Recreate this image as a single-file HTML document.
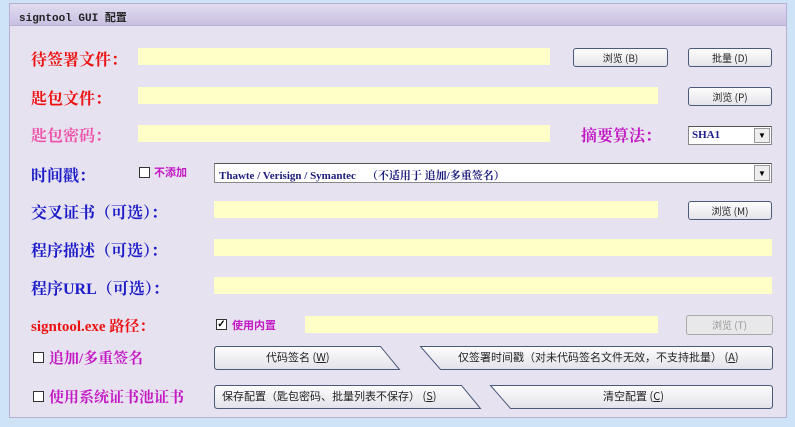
<!DOCTYPE html>
<html><head><meta charset="utf-8"><style>
*{margin:0;padding:0;box-sizing:border-box}
body{width:795px;height:427px;background:#cfe3f7;position:relative;overflow:hidden;font-family:"Liberation Serif","Noto Serif CJK SC",serif}
.panel{position:absolute;left:9px;top:3px;width:778px;height:415px;background:#e6e2f0;border:1px solid #b8b0d4}
.hdr{position:absolute;left:9px;top:3px;width:778px;height:23px;background:linear-gradient(#e2dcf0,#c9c0e2);border:1px solid #b8b0d4;font:bold 11px "Liberation Mono","Noto Sans CJK SC",monospace;color:#222;padding:5px 9px}
.a{position:absolute;white-space:nowrap}
.lbl{font-weight:bold;font-size:16px;font-family:"Liberation Serif","Noto Serif CJK SC",serif}
.red{color:#ee1111}.pink{color:#ee55aa}.blue{color:#1c1cc8}.mag{color:#c418c4}
.in{position:absolute;background:#ffffc8;height:17px}
.btn{position:absolute;background:linear-gradient(#fdfdfd,#e4e4ea);border:1px solid #4a5a7a;border-radius:3px;font:10px "Noto Sans CJK SC",sans-serif;color:#222;text-align:center;line-height:17px}
.cb{position:absolute;width:11px;height:11px;border:1px solid #333;background:#fff;font:bold 10px sans-serif;line-height:9px;text-align:center}
.st{font-size:11px;font-weight:bold;font-family:"Noto Sans CJK SC",sans-serif}
.bt{position:absolute;font:11px "Noto Sans CJK SC",sans-serif;color:#222}
</style></head><body>
<div class="panel"></div>
<div class="hdr">signtool GUI 配置</div>

<div class="a lbl red" style="left:31px;top:47px">待签署文件：</div>
<div class="in" style="left:138px;top:48px;width:412px"></div>
<div class="btn" style="left:573px;top:48px;width:95px;height:19px">浏览 (B)</div>
<div class="btn" style="left:688px;top:48px;width:84px;height:19px">批量 (D)</div>

<div class="a lbl red" style="left:31px;top:86px">匙包文件：</div>
<div class="in" style="left:138px;top:87px;width:520px"></div>
<div class="btn" style="left:688px;top:87px;width:84px;height:19px">浏览 (P)</div>

<div class="a lbl pink" style="left:31px;top:123px">匙包密码：</div>
<div class="in" style="left:138px;top:125px;width:412px"></div>
<div class="a lbl mag" style="left:581px;top:123px">摘要算法：</div>
<div class="a" style="left:688px;top:126px;width:84px;height:19px;background:#fff;border:1px solid #888;border-top-color:#555;font:bold 11px 'Liberation Serif',serif;color:#1c1c8c;padding:2px 3px">SHA1</div>
<div class="a" style="left:754px;top:128px;width:16px;height:15px;background:#eee;border:1px solid #999;font-size:8px;text-align:center;line-height:14px">▼</div>

<div class="a lbl blue" style="left:31px;top:163px">时间戳：</div>
<div class="cb" style="left:139px;top:167px"></div>
<div class="a st mag" style="left:154px;top:164px">不添加</div>
<div class="a" style="left:214px;top:163px;width:558px;height:20px;background:#fff;border:1px solid #888;border-top-color:#555;font:bold 11px 'Liberation Serif','Noto Serif CJK SC',serif;color:#1c1c7c;padding:3px 4px">Thawte / Verisign / Symantec &nbsp;&nbsp;&nbsp;（不适用于 追加/多重签名）</div>
<div class="a" style="left:754px;top:165px;width:16px;height:16px;background:#eee;border:1px solid #999;font-size:8px;text-align:center;line-height:15px">▼</div>

<div class="a lbl blue" style="left:31px;top:200px">交叉证书（可选）：</div>
<div class="in" style="left:214px;top:201px;width:444px"></div>
<div class="btn" style="left:688px;top:201px;width:84px;height:19px">浏览 (M)</div>

<div class="a lbl blue" style="left:31px;top:238px">程序描述（可选）：</div>
<div class="in" style="left:214px;top:239px;width:558px"></div>

<div class="a lbl blue" style="left:31px;top:276px">程序URL（可选）：</div>
<div class="in" style="left:214px;top:277px;width:558px"></div>

<div class="a lbl red" style="left:31px;top:315px;font-size:15px">signtool.exe 路径：</div>
<div class="cb" style="left:216px;top:319px">✓</div>
<div class="a st mag" style="left:232px;top:317px">使用内置</div>
<div class="in" style="left:305px;top:316px;width:353px"></div>
<div class="btn" style="left:686px;top:315px;width:87px;height:20px;color:#999;border-color:#aaa;background:#e8e8ea">浏览 (T)</div>

<svg class="a" style="left:0;top:0" width="795" height="427">
<defs><linearGradient id="g" x1="0" y1="0" x2="0" y2="1"><stop offset="0" stop-color="#fdfdfd"/><stop offset="1" stop-color="#e2e2ea"/></linearGradient></defs>
<g fill="url(#g)" stroke="#4a5a7a" stroke-width="1">
<path d="M217.5 346.5H380.5L399.5 369.5H217.5Q214.5 369.5 214.5 366.5V349.5Q214.5 346.5 217.5 346.5Z"/>
<path d="M420.5 346.5H769.5Q772.5 346.5 772.5 349.5V366.5Q772.5 369.5 769.5 369.5H440.5Z"/>
<path d="M217.5 385.5H461.5L480.5 408.5H217.5Q214.5 408.5 214.5 405.5V388.5Q214.5 385.5 217.5 385.5Z"/>
<path d="M490.5 385.5H769.5Q772.5 385.5 772.5 388.5V405.5Q772.5 408.5 769.5 408.5H510.5Z"/>
</g></svg>
<div class="cb" style="left:33px;top:352px"></div>
<div class="a lbl mag" style="left:49px;top:347px;font-size:15px">追加/多重签名</div>
<div class="bt" style="left:266px;top:349px">代码签名 (<u>W</u>)</div>
<div class="bt" style="left:458px;top:349px">仅签署时间戳（对未代码签名文件无效，不支持批量） (<u>A</u>)</div>
<div class="cb" style="left:33px;top:391px"></div>
<div class="a lbl mag" style="left:49px;top:386px;font-size:15px">使用系统证书池证书</div>
<div class="bt" style="left:222px;top:388px">保存配置（匙包密码、批量列表不保存） (<u>S</u>)</div>
<div class="bt" style="left:603px;top:388px">清空配置 (<u>C</u>)</div>
</body></html>
